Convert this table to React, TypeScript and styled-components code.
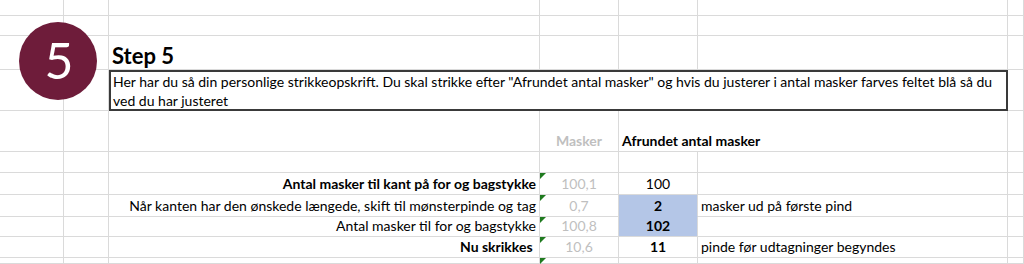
import React from "react";
import styled, { createGlobalStyle, css } from "styled-components";

const GlobalStyle = createGlobalStyle`
  html, body { margin: 0; padding: 0; background: #ffffff; }
  body { font-family: Lato, "Liberation Sans", sans-serif; color: #000; }
`;

const GRID = "#dadada";

const Sheet = styled.div`
  position: relative;
  width: 1024px;
  height: 264px;
  overflow: hidden;
  display: grid;
  grid-template-columns: 64px 45px 431px 79px 79px 310px 16px;
  grid-template-rows: 16px 20px 34px 41px 41px 21px 22px 22px 20px 21px 6px;
  background: #fff;
`;

type Align = "left" | "center" | "right";

const Cell = styled.div<{
  $align?: Align;
  $bold?: boolean;
  $muted?: boolean;
  $fill?: string;
  $span?: number;
  $flag?: boolean;
  $size?: number;
  $openBottom?: boolean;
}>`
  position: relative;
  box-sizing: border-box;
  display: flex;
  align-items: flex-end;
  justify-content: ${(p) =>
    p.$align === "center" ? "center" : p.$align === "right" ? "flex-end" : "flex-start"};
  padding: 0 3px ${(p) => (p.$size && p.$size > 16 ? 0 : 1)}px 3px;
  border-right: 1px solid ${GRID};
  border-bottom: 1px solid ${(p) => (p.$openBottom ? p.$fill || GRID : GRID)};
  background: ${(p) => p.$fill || "transparent"};
  font-size: ${(p) => p.$size || 14}px;
  line-height: 1.2;
  font-weight: ${(p) => (p.$bold ? 700 : 400)};
  color: ${(p) => (p.$muted ? "#bfbfbf" : "#000")};
  white-space: pre;
  ${(p) => p.$span && css`grid-column: span ${p.$span};`}
  ${(p) =>
    p.$flag &&
    css`
      &::before {
        content: "";
        position: absolute;
        top: 0;
        left: 0;
        border-top: 6px solid #1f7a1f;
        border-right: 6px solid transparent;
      }
    `}
`;

const InfoBox = styled.div`
  grid-column: span 4;
  box-sizing: border-box;
  border: 2px solid #3a3a3a;
  padding: 0 6px 0 2px;
  font-size: 14px;
  line-height: 19px;
  color: #000;
  background: #fff;
  overflow: hidden;
`;

const Badge = styled.div`
  position: absolute;
  left: 19px;
  top: 22px;
  width: 78px;
  height: 78px;
  border-radius: 50%;
  background: #6e1c3a;
  color: #fff;
  display: flex;
  align-items: center;
  justify-content: center;
  font-size: 50px;
  line-height: 1;
  font-weight: 400;
  padding: 0 0 2px 2px;
  box-sizing: border-box;
`;

const BLUE = "#b4c6e7";

type CellSpec = {
  text?: string;
  align?: Align;
  bold?: boolean;
  muted?: boolean;
  fill?: string;
  span?: number;
  flag?: boolean;
  size?: number;
  openBottom?: boolean;
};

const empty = (n: number): CellSpec[] => Array.from({ length: n }, () => ({}));

const rowsTop: CellSpec[][] = [
  empty(7),
  empty(7),
  [{}, {}, { text: "Step 5", bold: true, size: 22 }, {}, {}, {}, {}],
];

const rowsBottom: CellSpec[][] = [
  [
    {},
    {},
    {},
    { text: "Masker", bold: true, muted: true, align: "center" },
    { text: "Afrundet antal masker", bold: true, span: 2 },
    {},
  ],
  empty(7),
  [
    {},
    {},
    { text: "Antal masker til kant på for og bagstykke", bold: true, align: "right" },
    { text: "100,1", muted: true, align: "center", flag: true },
    { text: "100", align: "center" },
    {},
    {},
  ],
  [
    {},
    {},
    { text: "Når kanten har den ønskede længede, skift til mønsterpinde og tag", align: "right" },
    { text: "0,7", muted: true, align: "center", flag: true },
    { text: "2", align: "center", bold: true, fill: BLUE, openBottom: true },
    { text: "masker ud på første pind" },
    {},
  ],
  [
    {},
    {},
    { text: "Antal masker til for og bagstykke", align: "right" },
    { text: "100,8", muted: true, align: "center", flag: true },
    { text: "102", align: "center", bold: true, fill: BLUE },
    {},
    {},
  ],
  [
    {},
    {},
    { text: "Nu skrikkes ", bold: true, align: "right" },
    { text: "10,6", muted: true, align: "center", flag: true },
    { text: "11", align: "center", bold: true },
    { text: "pinde før udtagninger begyndes" },
    {},
  ],
  [{}, {}, {}, { flag: true }, {}, {}, {}],
];

const renderRow = (row: CellSpec[], r: string) =>
  row.map((c, i) => (
    <Cell
      key={`${r}-${i}`}
      $align={c.align}
      $bold={c.bold}
      $muted={c.muted}
      $fill={c.fill}
      $span={c.span}
      $flag={c.flag}
      $size={c.size}
      $openBottom={c.openBottom}
    >
      {c.text}
    </Cell>
  ));

export default function App() {
  return (
    <>
      <GlobalStyle />
      <Sheet>
        {rowsTop.map((row, r) => renderRow(row, `t${r}`))}
        <Cell />
        <Cell />
        <InfoBox>
          Her har du så din personlige strikkeopskrift. Du skal strikke efter "Afrundet antal masker" og hvis du
          justerer i antal masker farves feltet blå så du ved du har justeret
        </InfoBox>
        <Cell />
        {rowsBottom.map((row, r) => renderRow(row, `b${r}`))}
        <Badge>5</Badge>
      </Sheet>
    </>
  );
}
